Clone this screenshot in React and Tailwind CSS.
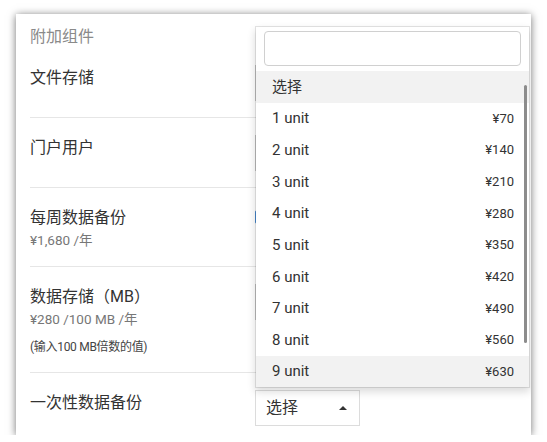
import React from "react";

const OPTIONS = [1, 2, 3, 4, 5, 6, 7, 8, 9].map((n) => ({ label: `${n} unit`, price: `¥${n * 70}` }));

function Row({ children, right, last, className = "" }) {
    return (
        <div className={`flex pt-[17px] ${last ? "" : "pb-[16px] border-b border-[#e6e6e6]"} ${className}`}>
            <div className="w-[225px] shrink-0">{children}</div>
            <div>{right}</div>
        </div>
    );
}

const BoxSelect = () => <div className="w-[105px] h-[36px] border border-[#c8c8c8] bg-white" />;

export default function App() {
    return (
        <div className="pt-[14px] pl-[16px] font-['Roboto','Noto_Sans_CJK_SC',sans-serif] text-[#333]">
            <div className="relative w-[515px] h-[421px] bg-white shadow-[0_1px_8px_rgba(0,0,0,0.55)] overflow-hidden pl-[14px] pr-[15px] pt-[12px]">
                <div className="text-[16px] leading-[22px] text-[#8a8a8a]">附加组件</div>

                <Row right={<BoxSelect />}>
                    <div className="mt-[1px] text-[16px] leading-[24px]">文件存储</div>
                </Row>

                <Row right={<BoxSelect />}>
                    <div className="mt-[1px] text-[16px] leading-[24px]">门户用户</div>
                </Row>

                <Row right={<div className="mt-[5px] w-[14px] h-[14px] border border-[#4a8fd9] rounded-[2px]" />}>
                    <div className="mt-[1px] text-[16px] leading-[24px]">每周数据备份</div>
                    <div className="text-[13.5px] leading-[20px] text-[#777]">¥1,680 /年</div>
                </Row>

                <Row right={<div className="w-[200px] h-[36px] border border-[#c8c8c8]" />}>
                    <div className="mt-[1px] text-[16px] leading-[24px]">数据存储（MB）</div>
                    <div className="text-[13.5px] leading-[20px] text-[#777]">¥280 /100 MB /年</div>
                    <div className="mt-[9px] text-[12px] leading-[18px] tracking-[-0.3px] text-[#444]">(输入100 MB倍数的值)</div>
                </Row>

                <Row
                    last
                    right={
                        <div className="w-[105px] h-[36px] border border-[#dcdcdc] flex items-center justify-between pl-[10px] pr-[12px]">
                            <span className="text-[16px] leading-[24px]">选择</span>
                            <span className="w-0 h-0 border-l-[4px] border-r-[4px] border-b-[4px] border-l-transparent border-r-transparent border-b-[#333]" />
                        </div>
                    }
                >
                    <div className="mt-[1px] text-[16px] leading-[24px]">一次性数据备份</div>
                </Row>

                {/* open dropdown */}
                <div className="absolute left-[239px] top-[12px] w-[275px] h-[362px] bg-white bg-clip-padding border border-black/10 shadow-[0_4px_8px_rgba(0,0,0,0.14)] overflow-hidden">
                    <div className="px-[8px] pt-[4px] pb-[5px]">
                        <div className="h-[35px] border border-[#d0d0d0] rounded-[4px]" />
                    </div>
                    <div className="h-[31.67px] bg-[#f2f2f2] flex items-center pl-[16px] text-[15px]">选择</div>
                    {OPTIONS.map((o, i) => (
                        <div
                            key={o.label}
                            className={`h-[31.67px] flex items-center justify-between pl-[16px] pr-[15px] ${i === 8 ? "bg-[#f2f2f2]" : ""}`}
                        >
                            <span className="text-[15px]">{o.label}</span>
                            <span className="text-[13px]">{o.price}</span>
                        </div>
                    ))}
                    <div className="absolute left-[268px] top-[58px] w-[3px] h-[258px] rounded-full bg-[#8c8c8c]" />
                </div>
            </div>
        </div>
    );
}
